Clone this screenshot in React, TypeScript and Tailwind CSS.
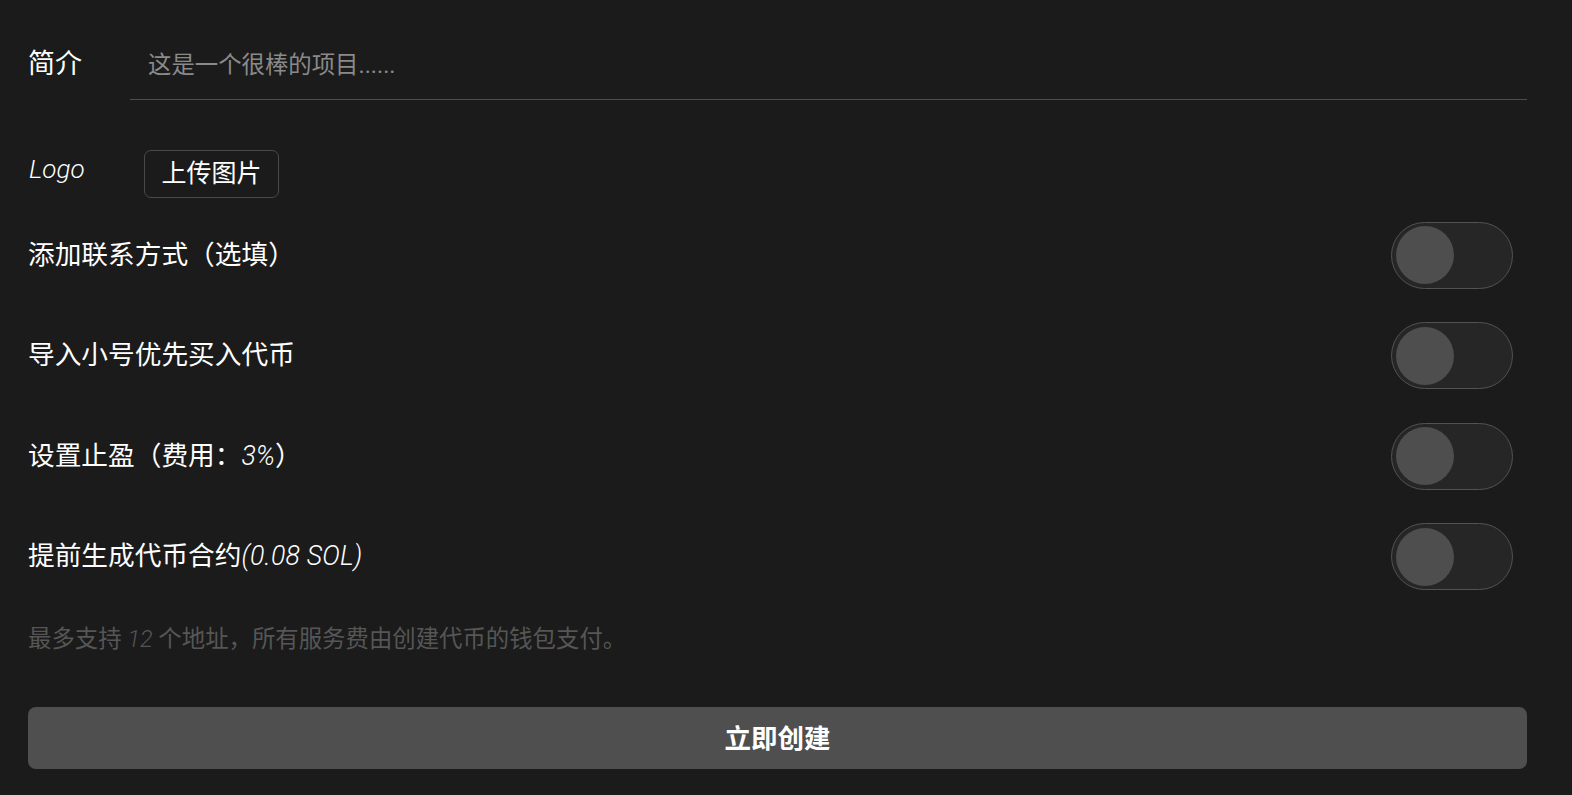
import React from "react";

const font = { fontFamily: 'Roboto, "Noto Sans CJK SC", sans-serif' };

function Toggle() {
  return (
    <div className="w-[122px] h-[67px] rounded-full border border-[#525252] bg-[#262626] flex items-center pl-[4px] shrink-0">
      <div className="w-[58px] h-[58px] rounded-full bg-[#4e4e4e]" />
    </div>
  );
}

function ToggleRow({ children }: { children: React.ReactNode }) {
  return (
    <div className="flex items-center justify-between h-[67px] pr-[14px]">
      <div className="text-[26.7px] text-white leading-none">{children}</div>
      <Toggle />
    </div>
  );
}

export default function App() {
  return (
    <div className="min-h-screen w-full bg-[#1b1b1b] text-white" style={font}>
      <div className="pl-[28px] pr-[45px] pt-[28px]">
        <div className="flex items-stretch">
          <div className="w-[102px] flex items-center text-[27px] leading-none text-white pt-[1px]">简介</div>
          <div className="flex-1 h-[72px] border-b border-[#4d4d4d] flex items-center pl-[18px] pt-[4px]">
            <input
              className="w-full bg-transparent outline-none text-[23.4px] text-white placeholder:text-[#8a8a8a]"
              placeholder="这是一个很棒的项目......"
              style={font}
            />
          </div>
        </div>

        <div className="flex items-center mt-[50px] h-[48px]">
          <div className="w-[116px] text-[26px] italic font-light leading-none -mt-[11px] pl-[1px]">Logo</div>
          <button className="h-[48px] w-[135px] border border-[#4a4a4a] rounded-[7px] text-[25px] text-white bg-transparent flex items-center justify-center" style={font}>
            上传图片
          </button>
        </div>

        <div className="flex flex-col gap-[33.5px] mt-[23.5px]">
          <ToggleRow>添加联系方式（选填）</ToggleRow>
          <ToggleRow>导入小号优先买入代币</ToggleRow>
          <ToggleRow>
            设置止盈（费用：<span className="italic font-light">3%</span>）
          </ToggleRow>
          <ToggleRow>
            提前生成代币合约<span className="italic font-light tracking-[0.2px]">(0.08 SOL)</span>
          </ToggleRow>
        </div>

        <div className="mt-[38px] text-[23.4px] leading-none text-[#565656]">
          最多支持 <span className="italic font-light">12</span> 个地址，所有服务费由创建代币的钱包支付。
        </div>

        <button className="mt-[56px] w-full h-[62px] rounded-[8px] bg-[#4f4f4f] text-white text-[26.5px] font-bold flex items-center justify-center" style={font}>
          立即创建
        </button>
      </div>
    </div>
  );
}
